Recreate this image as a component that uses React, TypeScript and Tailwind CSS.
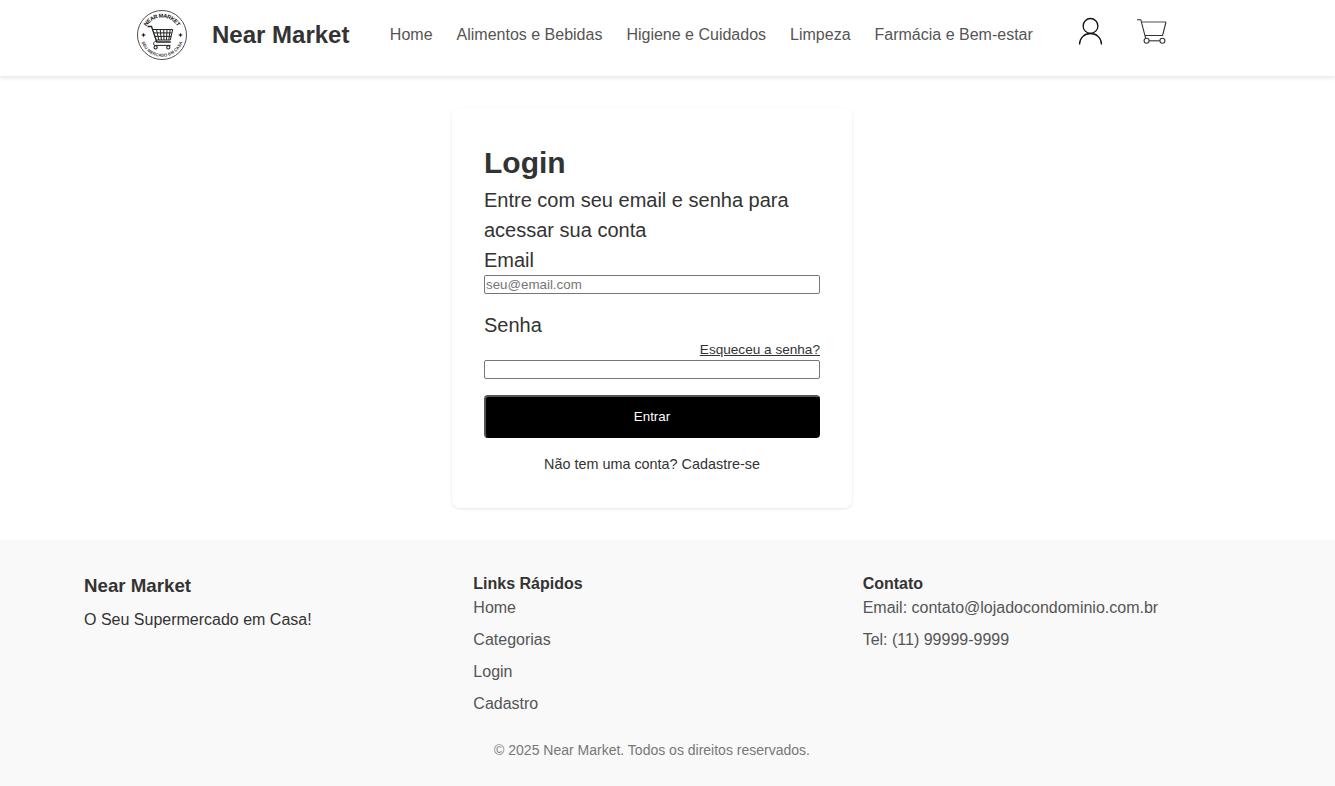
import React from "react";

const navLinks = ["Home", "Alimentos e Bebidas", "Higiene e Cuidados", "Limpeza", "Farmácia e Bem-estar"];
const quickLinks = ["Home", "Categorias", "Login", "Cadastro"];

function Logo() {
  return (
    <svg className="block h-[50px] w-[50px]" viewBox="0 0 50 50" fill="none" stroke="#222">
      <defs>
        <path id="logo-top" d="M7.5 25a17.500 17.500 0 0 1 35 0" />
        <path id="logo-bottom" d="M3.3 25a21.700 21.700 0 0 0 43.400 0" />
      </defs>
      <circle cx="25" cy="25" r="24.5" strokeWidth="0.8" />
      <g fill="#111" stroke="none" fontFamily="Liberation Sans, sans-serif" fontWeight="bold" textAnchor="middle">
        <text fontSize="5.6"><textPath href="#logo-top" startOffset="50%" textLength="37">NEAR MARKET</textPath></text>
        <text fontSize="4.2" fill="#333"><textPath href="#logo-bottom" startOffset="50%" textLength="53">SEU MERCADO EM CASA</textPath></text>
      </g>
      <path d="M10.500 16.500h4L19.800 32h14" strokeWidth="1.3" />
      <path d="M15.500 19.500h20.200L33.300 30H19.300M16.600 22.900h18.200M17.800 26.400h16.300M19.500 19.500l2.300 10.500M23.200 19.500l1.200 10.500M26.700 19.500l.3 10.500M30 19.500l-.5 10.500M33.200 19.500l-1.400 10.500" strokeWidth="1" />
      <path d="M19.800 30.500c-3.600 1-4.200 4.900-1.600 4.900h15.300" strokeWidth="1" />
      <circle cx="18.600" cy="37.400" r="1.600" strokeWidth="1.1" />
      <circle cx="31.300" cy="37.400" r="1.600" strokeWidth="1.1" />
      <path d="M6.500 23l.6 1.400 1.400.6-1.400.6-.6 1.400-.6-1.400-1.400-.6 1.400-.6zM43.500 23l.6 1.400 1.400.6-1.400.6-.6 1.400-.6-1.400-1.400-.6 1.400-.6z" fill="#111" strokeWidth="0.3" />
    </svg>
  );
}

function UserIcon() {
  return (
    <svg className="block h-[30px] w-[30px]" viewBox="0 0 30 30" fill="none" stroke="#111" strokeWidth="1.3">
      <circle cx="15.500" cy="9.900" r="7.400" />
      <path d="M4.500 28.500c0-6.300 4.800-11 11-11s11 4.700 11 11" />
    </svg>
  );
}

function CartIcon() {
  return (
    <svg className="block h-[30px] w-[30px]" viewBox="0 0 30 30" fill="none" stroke="#333" strokeWidth="1.1">
      <path d="M4.500 6h24.500" stroke="#777" strokeWidth="1.300" />
      <path d="M0 3.700h3.800l4.800 18.500M29 6l-3.400 13.500H7.900" />
      <circle cx="9.600" cy="24.800" r="2.500" />
      <circle cx="25.400" cy="24.800" r="2.500" />
      <path d="M12.100 24.800h10.800" />
    </svg>
  );
}

export default function App() {
  return (
    <div className="flex h-[786px] flex-col overflow-hidden bg-white font-['Liberation_Sans',Arial,sans-serif] text-base text-[#333]">
      <header className="h-[76px] shrink-0 bg-white shadow-[0_2px_4px_rgba(0,0,0,0.1)]">
        <div className="flex pt-[10px] pl-[137px]">
          <Logo />
          <div className="ml-[25px] flex h-[50px] w-[177.85px] items-center text-2xl font-bold">Near Market</div>
          <nav className="flex h-[49px] items-center gap-6 whitespace-nowrap text-[#555]">
            {navLinks.map((link) => <a key={link} href="#">{link}</a>)}
          </nav>
          <div className="ml-[42.15px] flex gap-8 pt-[6px]">
            <a href="#" aria-label="Conta"><UserIcon /></a>
            <a href="#" aria-label="Carrinho"><CartIcon /></a>
          </div>
        </div>
      </header>

      <main className="flex h-[464px] shrink-0 pt-8 pl-[452px]">
        <form className="flex h-[400px] w-[400px] flex-col rounded-lg p-8 text-xl leading-[30px] shadow-[0_1px_3px_rgba(0,0,0,0.1)]">
          <h1 className="text-[30px] leading-[45px] font-bold">Login</h1>
          <p>Entre com seu email e senha para acessar sua conta</p>
          <label htmlFor="email">Email</label>
          <input id="email" type="email" placeholder="seu@email.com" className="h-[19px] w-full rounded-[2px] border border-[#767676] px-px text-[13.333px] leading-[15px] outline-none placeholder:text-[#757575]" />
          <label htmlFor="password" className="mt-4">Senha</label>
          <a href="#" className="self-end text-[13.6px] leading-5 underline">Esqueceu a senha?</a>
          <input id="password" type="password" className="h-[19px] w-full rounded-[2px] border border-[#767676] px-px text-[13.333px] leading-[15px] outline-none" />
          <button type="button" className="mt-4 h-[43px] w-full rounded border-2 border-black bg-black text-[13.333px] leading-5 text-white [border-style:outset]">Entrar</button>
          <p className="mt-4 text-center text-[14.4px] leading-[21.6px]">Não tem uma conta? <a href="#">Cadastre-se</a></p>
        </form>
      </main>

      <footer className="h-[246px] shrink-0 bg-[#f9f9f9]">
        <div className="ml-[52px] w-[1200px] px-8 pt-8">
          <div className="grid grid-cols-3 gap-8 leading-6">
            <section>
              <h3 className="text-[18.72px] leading-7 font-bold">Near Market</h3>
              <p className="mt-2">O Seu Supermercado em Casa!</p>
            </section>
            <section>
              <h4 className="font-bold">Links Rápidos</h4>
              <ul className="flex flex-col gap-2 text-[#555]">
                {quickLinks.map((link) => <li key={link}><a href="#">{link}</a></li>)}
              </ul>
            </section>
            <section>
              <h4 className="font-bold">Contato</h4>
              <ul className="flex flex-col gap-2 text-[#555]">
                <li>Email: contato@lojadocondominio.com.br</li>
                <li>Tel: (11) 99999-9999</li>
              </ul>
            </section>
          </div>
          <p className="mt-6 text-center text-sm leading-[21px] text-[#777]">© 2025 Near Market. Todos os direitos reservados.</p>
        </div>
      </footer>
    </div>
  );
}
